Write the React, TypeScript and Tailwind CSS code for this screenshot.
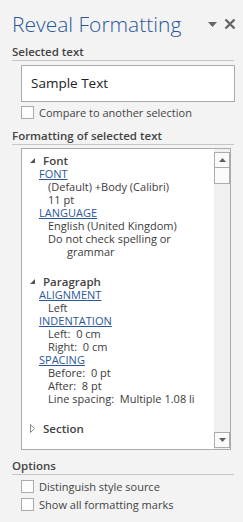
import type { ReactNode } from "react";

function Heading({ children }: { children: ReactNode }) {
  return (
    <div className="ml-[12px] mr-[9px] border-b border-[#c6c6c6] text-[11.5px] font-semibold leading-[16px] text-[#444]">
      {children}
    </div>
  );
}

function Checkbox({ label }: { label: string }) {
  return (
    <div className="ml-[21px] flex h-[13px] items-center gap-[5px]">
      <span className="block h-[13px] w-[13px] shrink-0 border border-[#ababab] bg-[#fdfdfd]" />
      <span className="whitespace-nowrap text-[11px] leading-[13px] text-[#444]">{label}</span>
    </div>
  );
}

function GroupHeader({ label, open }: { label: string; open: boolean }) {
  return (
    <div className="flex h-[13px] items-center text-[11.5px] font-semibold leading-[13px] text-[#444]">
      <span className="flex w-[21px] justify-end pr-[8px]">
        {open ? (
          <svg width="5" height="5" viewBox="0 0 5 5">
            <path d="M5 0V5H0Z" fill="#555" />
          </svg>
        ) : (
          <svg width="5" height="9" viewBox="0 0 5 9" className="-ml-[2px]">
            <path d="M0.5 0.5L4.5 4.5L0.5 8.5Z" fill="none" stroke="#888" strokeWidth="1" />
          </svg>
        )}
      </span>
      <span>{label}</span>
    </div>
  );
}

function Prop({ label }: { label: string }) {
  return (
    <div className="pl-[17px] text-[11px] leading-[13px]">
      <span className="text-[#2b579a] underline decoration-[#2b579a] underline-offset-[1px]">{label}</span>
    </div>
  );
}

function Value({ text, indent = 26 }: { text: string; indent?: number }) {
  return (
    <div
      className="whitespace-pre text-[11px] leading-[13px] text-[#3b3b3b]"
      style={{ paddingLeft: indent }}
    >
      {text}
    </div>
  );
}

function ScrollArrow({ up }: { up: boolean }) {
  return (
    <div className="flex h-[16px] w-[16px] items-center justify-center border border-[#ababab] bg-[#fafafa]">
      <svg width="7" height="4" viewBox="0 0 7 4">
        <path d={up ? "M0 4H7L3.5 0Z" : "M0 0H7L3.5 4Z"} fill="#606060" />
      </svg>
    </div>
  );
}

export default function App() {
  return (
    <div
      className="h-[522px] w-[243px] overflow-hidden bg-[#f3f3f3]"
      style={{ fontFamily: '"Open Sans", "Noto Sans", sans-serif' }}
    >
      <div className="flex items-center justify-between pl-[12px] pr-[7px] pt-[10px]">
        <h1 className="text-[21px] font-light leading-[28px] text-[#2b579a]">Reveal Formatting</h1>
        <div className="flex items-center gap-[7px]">
          <svg width="9" height="5" viewBox="0 0 9 5">
            <path d="M0 0H9L4.5 5Z" fill="#666" />
          </svg>
          <svg width="12" height="12" viewBox="0 0 12 12">
            <path d="M1.5 1.5L10.5 10.5M10.5 1.5L1.5 10.5" stroke="#666" strokeWidth="2.4" />
          </svg>
        </div>
      </div>

      <div className="mt-[6px]">
        <Heading>Selected text</Heading>
      </div>
      <div className="ml-[21px] mt-[4px] flex h-[37px] w-[214px] items-center border border-[#ababab] bg-white pl-[9px] text-[13.5px] text-[#222]">
        Sample Text
      </div>
      <div className="mt-[4px]">
        <Checkbox label="Compare to another selection" />
      </div>

      <div className="mt-[9px]">
        <Heading>Formatting of selected text</Heading>
      </div>
      <div className="ml-[21px] mt-[3px] flex h-[302px] w-[210px] border border-[#ababab] bg-white">
        <div className="min-w-0 flex-1 pt-[5px]">
          <GroupHeader label="Font" open />
          <Prop label="FONT" />
          <Value text="(Default) +Body (Calibri)" />
          <Value text="11 pt" />
          <Prop label="LANGUAGE" />
          <Value text="English (United Kingdom)" />
          <Value text="Do not check spelling or" />
          <Value text="grammar" indent={45} />

          <div className="mt-[17px]">
            <GroupHeader label="Paragraph" open />
          </div>
          <Prop label="ALIGNMENT" />
          <Value text="Left" />
          <Prop label="INDENTATION" />
          <Value text="Left:  0 cm" />
          <Value text="Right:  0 cm" />
          <Prop label="SPACING" />
          <Value text="Before:  0 pt" />
          <Value text="After:  8 pt" />
          <Value text="Line spacing:  Multiple 1.08 li" />

          <div className="mt-[17px]">
            <GroupHeader label="Section" open={false} />
          </div>
        </div>
        <div className="flex w-[16px] flex-col bg-[#f0f0f0] pb-[1px] pt-[3px]">
          <ScrollArrow up />
          <div className="-mt-[1px] h-[17px] w-[16px] border border-[#ababab] bg-[#fafafa]" />
          <div className="flex-1" />
          <ScrollArrow up={false} />
        </div>
      </div>

      <div className="mt-[8px]">
        <Heading>Options</Heading>
      </div>
      <div className="mt-[5px]">
        <Checkbox label="Distinguish style source" />
      </div>
      <div className="mt-[5px]">
        <Checkbox label="Show all formatting marks" />
      </div>
    </div>
  );
}
